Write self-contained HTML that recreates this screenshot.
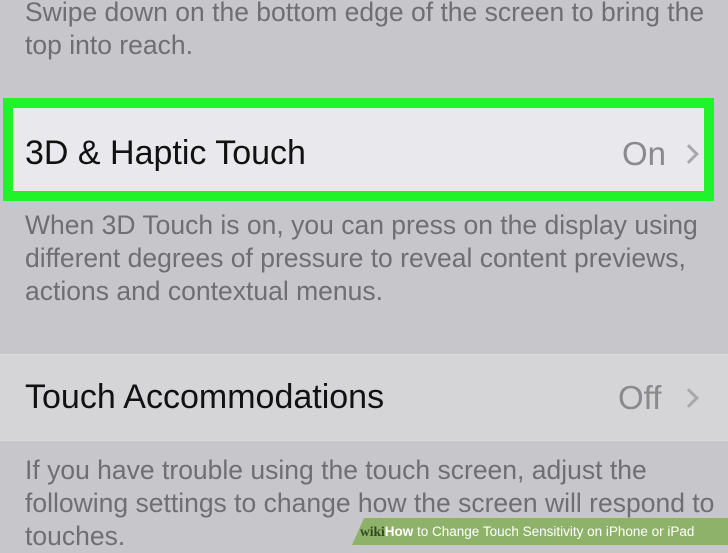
<!DOCTYPE html>
<html><head><meta charset="utf-8"><style>
html,body{margin:0;padding:0}
body{width:728px;height:545px;overflow:hidden;background:#c7c7cb;font-family:"Liberation Sans",sans-serif;position:relative}
.t{position:absolute;left:25px;white-space:nowrap;color:#6e6e73;font-size:26.5px;line-height:33px}
.box{position:absolute;left:3px;top:98px;width:691px;height:83px;border:10px solid #22f22a;background:#e9e9ed}
.row{position:absolute;left:0;top:354px;width:728px;height:85px;background:#d5d5d8;border-top:1px solid #dcdce0;border-bottom:1px solid #dadade}
.lbl{position:absolute;left:25px;font-size:34px;color:#111;white-space:nowrap}
.val{position:absolute;font-size:33px;color:#8a8a8e;white-space:nowrap}
.chev{position:absolute;width:11px;height:11px;border-right:3px solid #a8a8ac;border-top:3px solid #a8a8ac;transform:rotate(45deg)}
.ban{position:absolute;left:352px;top:518px;width:376px;height:27px;background:#8fb26a;clip-path:polygon(12px 0,100% 0,100% 100%,0 100%)}
.ban span{position:absolute;left:8px;top:6px;font-size:13.5px;color:#fff;white-space:nowrap}
</style></head><body>
<div class="t" style="top:-4px">Swipe down on the bottom edge of the screen to bring the</div>
<div class="t" style="top:29px">top into reach.</div>
<div class="box"></div>
<div class="lbl" style="top:134px">3D &amp; Haptic Touch</div>
<div class="val" style="left:622px;top:135px">On</div>
<div class="chev" style="left:682px;top:147px"></div>
<div class="t" style="top:209px">When 3D Touch is on, you can press on the display using</div>
<div class="t" style="top:242px">different degrees of pressure to reveal content previews,</div>
<div class="t" style="top:275px">actions and contextual menus.</div>
<div class="row"></div>
<div class="lbl" style="top:378px">Touch Accommodations</div>
<div class="val" style="left:618px;top:379px">Off</div>
<div class="chev" style="left:682px;top:391px"></div>
<div class="t" style="top:454px">If you have trouble using the touch screen, adjust the</div>
<div class="t" style="top:487px">following settings to change how the screen will respond to</div>
<div class="t" style="top:520px">touches.</div>
<div class="ban"><span><b style="font-family:'Liberation Serif',serif;color:#2f4a1e">wiki</b><b style="color:#fff">How</b> to Change Touch Sensitivity on iPhone or iPad</span></div>
</body></html>
